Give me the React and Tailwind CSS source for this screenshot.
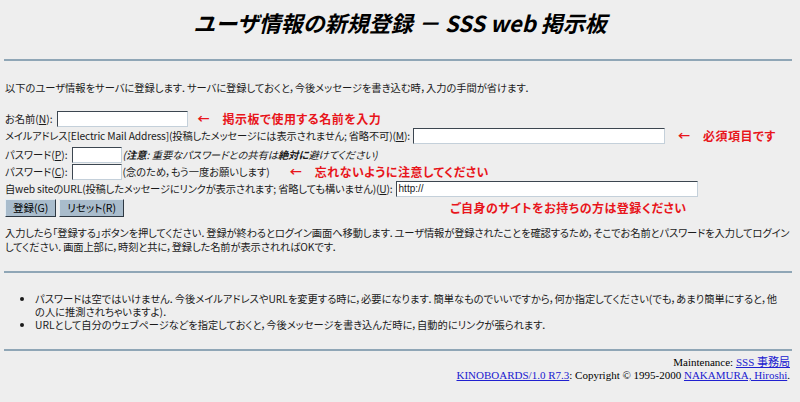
import React from "react";

const jp = "font-['Noto_Sans_CJK_JP','Noto_Sans',sans-serif] [font-feature-settings:'palt']";

function Hr() {
    return <div className="ml-[4px] mr-[8px] h-[2px] bg-[#8fa6b6]" />;
}

function Field({ w }) {
    return (
        <span className="inline-block align-middle h-[16px] bg-white border border-t-[#3c4650] border-l-[#3c4650] border-r-[#c4d0da] border-b-[#c4d0da] box-border" style={{ width: w }} />
    );
}

function Red({ children, className = "" }) {
    return <span className={`text-[#e8151b] font-bold text-[12px] tracking-[0.5px] ${className}`}>{children}</span>;
}

function Btn({ children }) {
    return (
        <button className="h-[18px] px-[7px] bg-[#a9bccc] border border-t-[#e4ecf2] border-l-[#e4ecf2] border-r-[#2e3842] border-b-[#2e3842] text-[10.5px] leading-none text-black">
            {children}
        </button>
    );
}

export default function App() {
    return (
        <div className={`w-[800px] h-[402px] bg-[#eeeeee] overflow-hidden text-[#1a1a1a] text-[10.25px] leading-[14px] whitespace-nowrap ${jp}`}>
            <div className="h-[59px] pt-[9px]">
                <h1 className="text-center text-[22px] leading-[27px] font-bold italic text-black [font-feature-settings:normal]">
                    ユーザ情報の新規登録 － SSS web 掲示板
                </h1>
            </div>
            <Hr />

            <p className="mt-[20px] pl-[5px]">
                以下のユーザ情報をサーバに登録します．サーバに登録しておくと，今後メッセージを書き込む時，入力の手間が省けます．
            </p>

            <div className="mt-[15px] pl-[5px]">
                <div className="h-[17px] flex items-center">
                    <span>お名前(<u>N</u>):</span>
                    <span className="ml-[4px] flex"><Field w={131} /></span>
                    <Red className="ml-[10px]">←　掲示板で使用する名前を入力</Red>
                </div>
                <div className="h-[17px] flex items-center">
                    <span className="tracking-[-0.15px]">メイルアドレス[Electric Mail Address](投稿したメッセージには表示されません; 省略不可)(<u>M</u>):</span>
                    <span className="ml-[3px] flex"><Field w={252} /></span>
                    <Red className="ml-[13px]">←　必須項目です</Red>
                </div>
                <div className="mt-[2px] h-[17px] flex items-center">
                    <span>パスワード(<u>P</u>):</span>
                    <span className="ml-[4px] flex"><Field w={50} /></span>
                    <span className="ml-[1px] italic">(<b>注意</b>: 重要なパスワードとの共有は<b>絶対に</b>避けてください)</span>
                </div>
                <div className="h-[17px] flex items-center">
                    <span>パスワード(<u>C</u>):</span>
                    <span className="ml-[4px] flex"><Field w={50} /></span>
                    <span className="ml-[1px]">(念のため，もう一度お願いします)</span>
                    <Red className="ml-[20px]">←　忘れないように注意してください</Red>
                </div>
                <div className="h-[17px] flex items-center">
                    <span className="tracking-[-0.15px]">自web siteのURL(投稿したメッセージにリンクが表示されます; 省略しても構いません)(<u>U</u>):</span>
                    <span className="ml-[3px] relative flex">
                        <Field w={302} />
                        <span className="absolute left-[3px] top-[1px] text-[10px] leading-[14px] font-['Liberation_Sans',sans-serif]">http://</span>
                    </span>
                </div>
                <div className="mt-[2px] h-[18px] flex items-center">
                    <Btn>登録(G)</Btn>
                    <span className="ml-[3px] flex"><Btn>リセット(R)</Btn></span>
                    <Red className="ml-[326px]">ご自身のサイトをお持ちの方は登録ください</Red>
                </div>
            </div>

            <p className="mt-[9px] pl-[5px] tracking-[-0.1px]">
                入力したら「登録する」ボタンを押してください．登録が終わるとログイン画面へ移動します．ユーザ情報が登録されたことを確認するため，そこでお名前とパスワードを入力してログイン<br />
                してください．画面上部に，時刻と共に，登録した名前が表示されればOKです．
            </p>

            <div className="mt-[17px]"><Hr /></div>

            <ul className="mt-[19px] pl-[35px] pr-[8px] list-disc leading-[13px]">
                <li>
                    パスワードは空ではいけません．今後メイルアドレスやURLを変更する時に，必要になります．簡単なものでいいですから，何か指定してください(でも，あまり簡単にすると，他<br />
                    の人に推測されちゃいますよ)．
                </li>
                <li>URLとして自分のウェブページなどを指定しておくと，今後メッセージを書き込んだ時に，自動的にリンクが張られます．</li>
            </ul>

            <div className="mt-[18px]"><Hr /></div>

            <div className="mt-[5px] pr-[10px] text-right text-[11px] leading-[13px] text-black font-['Liberation_Serif','Noto_Sans_CJK_JP',serif]">
                <div>Maintenance: <a href="#" className="text-[#2020d0] underline">SSS 事務局</a></div>
                <div>
                    <a href="#" className="text-[#2020d0] underline">KINOBOARDS/1.0 R7.3</a>: Copyright © 1995-2000{" "}
                    <a href="#" className="text-[#2020d0] underline">NAKAMURA, Hiroshi</a>.
                </div>
            </div>
        </div>
    );
}
